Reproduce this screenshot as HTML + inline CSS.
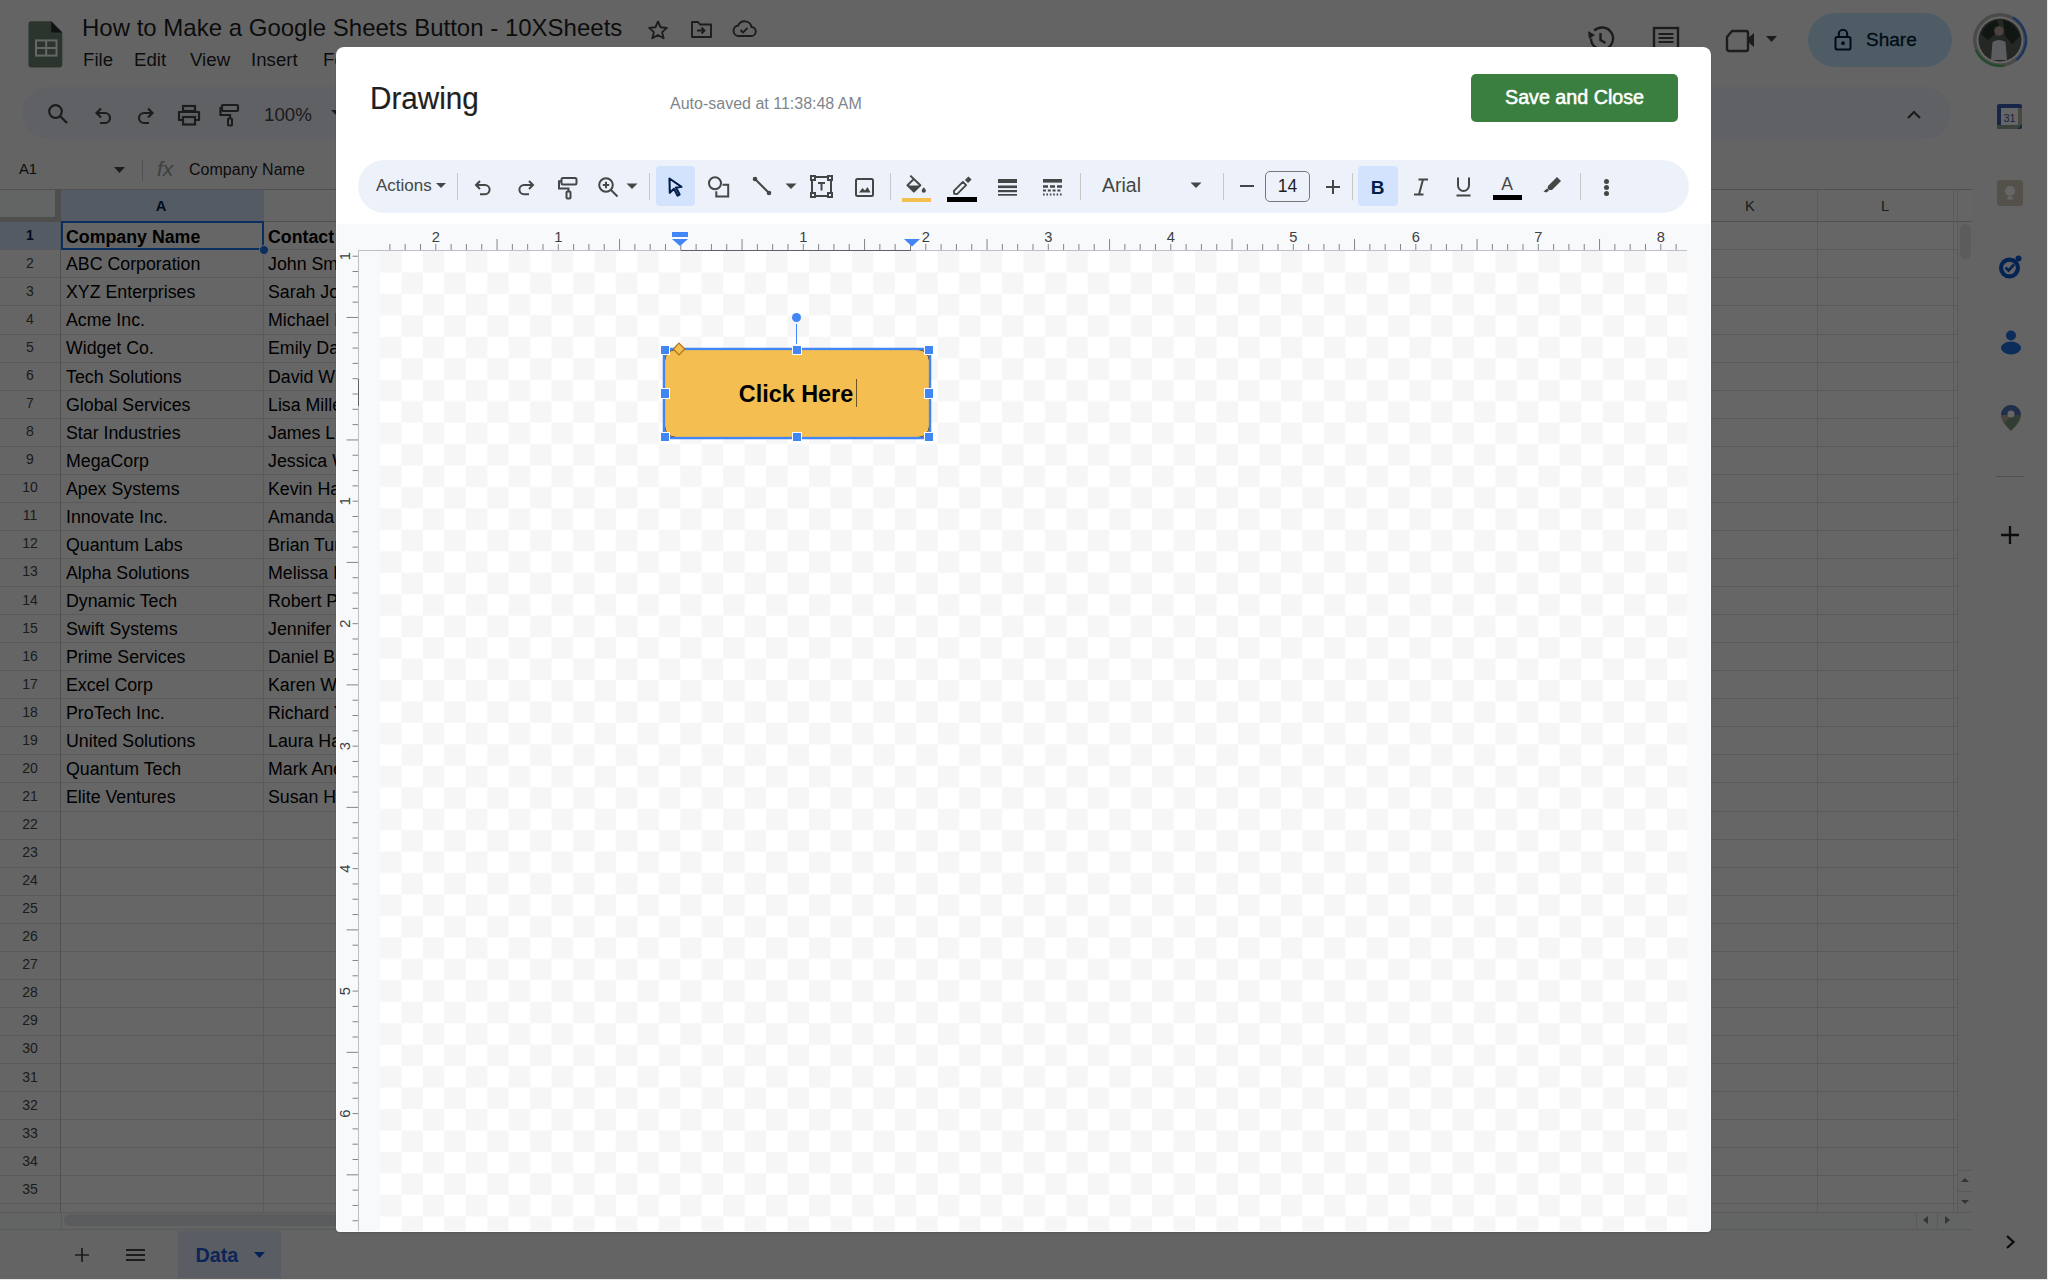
<!DOCTYPE html>
<html><head><meta charset="utf-8"><title>Drawing</title>
<style>
html,body{margin:0;padding:0;}
body{width:2048px;height:1280px;overflow:hidden;position:relative;font-family:"Liberation Sans", sans-serif;background:#666;}
</style></head><body>
<div style="position:absolute;left:0px;top:0px;width:2048px;height:1280px;background:#f9fbfd"></div><svg style="position:absolute;left:28px;top:21px;" width="36" height="47" viewBox="0 0 36 47" >
<path d="M3 0.3 H23.2 L34.3 11.4 V43.5 a3 3 0 0 1 -3 3 H3.4 a3 3 0 0 1 -3 -3 V3.3 a3 3 0 0 1 3 -3z" fill="#6f8672"/>
<path d="M23.2 0.3 V11.4 H34.3z" fill="#2a302b"/>
<rect x="8" y="19.4" width="20.5" height="15.2" fill="none" stroke="#fff" stroke-width="2"/>
<path d="M8 27 H28.5 M18.2 19.4 V34.6" stroke="#fff" stroke-width="2"/>
</svg><div style="position:absolute;left:82px;top:15.68px;font-size:24px;line-height:24px;font-weight:400;color:#1f1f1f;white-space:nowrap;">How to Make a Google Sheets Button - 10XSheets</div><svg style="position:absolute;left:647px;top:19px;" width="22" height="22" viewBox="0 0 22 22" ><path d="M11 2.5 L13.6 8.3 L19.9 8.9 L15.1 13.1 L16.6 19.3 L11 16 L5.4 19.3 L6.9 13.1 L2.1 8.9 L8.4 8.3Z" fill="none" stroke="#444746" stroke-width="1.9" stroke-linejoin="round"/></svg><svg style="position:absolute;left:690px;top:20px;" width="23" height="19" viewBox="0 0 23 19" ><path d="M2 2 H8 L10 4.5 H21 V17 H2Z" fill="none" stroke="#444746" stroke-width="1.9" stroke-linejoin="round"/><path d="M7 10.5 H14 M11.5 7.5 L14.5 10.5 L11.5 13.5" fill="none" stroke="#444746" stroke-width="1.8"/></svg><svg style="position:absolute;left:731px;top:19px;" width="26" height="20" viewBox="0 0 26 20" ><path d="M7 17 H20 a4.5 4.5 0 0 0 0.5 -9 a7 7 0 0 0 -13.3 -1.5 a5.3 5.3 0 0 0 -0.2 10.5z" fill="none" stroke="#444746" stroke-width="1.9"/><path d="M9.5 11 L12 13.5 L16.5 9" fill="none" stroke="#444746" stroke-width="1.8"/></svg><div style="position:absolute;left:83px;top:51.20px;font-size:18.67px;line-height:18.67px;font-weight:400;color:#1f1f1f;white-space:nowrap;">File</div><div style="position:absolute;left:134px;top:51.20px;font-size:18.67px;line-height:18.67px;font-weight:400;color:#1f1f1f;white-space:nowrap;">Edit</div><div style="position:absolute;left:190px;top:51.20px;font-size:18.67px;line-height:18.67px;font-weight:400;color:#1f1f1f;white-space:nowrap;">View</div><div style="position:absolute;left:251px;top:51.20px;font-size:18.67px;line-height:18.67px;font-weight:400;color:#1f1f1f;white-space:nowrap;">Insert</div><div style="position:absolute;left:323px;top:51.20px;font-size:18.67px;line-height:18.67px;font-weight:400;color:#1f1f1f;white-space:nowrap;">Format</div><svg style="position:absolute;left:1585px;top:25px;" width="31" height="28" viewBox="0 0 31 28" ><path d="M6 13.5 a11 11 0 1 0 3.2 -7.8" fill="none" stroke="#444746" stroke-width="2.4"/><path d="M3 6 L4 14 L10 10z" fill="#444746"/><path d="M15.5 8 V15 L20.5 18" fill="none" stroke="#444746" stroke-width="2.4"/></svg><svg style="position:absolute;left:1651px;top:25px;" width="30" height="28" viewBox="0 0 30 28" ><rect x="3" y="3" width="24" height="21" fill="none" stroke="#444746" stroke-width="2.4"/><path d="M7.5 9 H22.5 M7.5 13 H22.5 M7.5 17 H22.5" stroke="#444746" stroke-width="2.2"/></svg><svg style="position:absolute;left:1724px;top:28px;" width="32" height="26" viewBox="0 0 32 26" ><path d="M8 3 H22 a2 2 0 0 1 2 2 V21 a2 2 0 0 1 -2 2 H5 a2 2 0 0 1 -2 -2 V9z" fill="none" stroke="#444746" stroke-width="2.4" stroke-linejoin="round"/><path d="M24 10 L30 5 V19 L24 14z" fill="#444746"/></svg><svg style="position:absolute;left:1766px;top:36px;" width="12" height="7" viewBox="0 0 12 7" ><path d="M0 0 H11 L5.5 6z" fill="#444746"/></svg><div style="position:absolute;left:1808px;top:13px;width:144px;height:54px;background:#c2e7ff;border-radius:27px"></div><svg style="position:absolute;left:1833px;top:27px;" width="20" height="24" viewBox="0 0 20 24" ><rect x="2.5" y="10" width="15" height="12.5" rx="1.8" fill="none" stroke="#001d35" stroke-width="2"/><path d="M5.8 10 V7 a4.2 4.2 0 0 1 8.4 0 V10" fill="none" stroke="#001d35" stroke-width="2"/><circle cx="10" cy="16.2" r="1.9" fill="#001d35"/></svg><div style="position:absolute;left:1866px;top:30.42px;font-size:19px;line-height:19px;font-weight:400;color:#001d35;white-space:nowrap;-webkit-text-stroke:0.3px #001d35;">Share</div><svg style="position:absolute;left:1972px;top:12px;" width="56" height="56" viewBox="0 0 56 56" >
<circle cx="28" cy="28" r="27" fill="#b8bab6"/>
<circle cx="28" cy="28" r="26" fill="none" stroke="#4285f4" stroke-width="2.4" stroke-dasharray="50 200" transform="rotate(-60 28 28)"/>
<circle cx="28" cy="28" r="26" fill="none" stroke="#5bb974" stroke-width="2.4" stroke-dasharray="35 200" transform="rotate(80 28 28)"/>
<circle cx="28" cy="28" r="23.5" fill="#ffffff"/>
<circle cx="28" cy="28" r="21.5" fill="#59645a"/>
<path d="M9 22 q5 -12 16 -14 l3 10 l-12 10z M31 8 q12 2 17 16 l-8 8 l-7 -8z" fill="#2f372f"/>
<circle cx="27" cy="19" r="4.8" fill="#b9a995"/>
<path d="M19 48 l1.5 -18 q6.5 -4 13 0 l1.5 18z" fill="#e6e9ee"/>
</svg><div style="position:absolute;left:22px;top:87px;width:1929px;height:52px;background:#edf2fa;border-radius:26px"></div><svg style="position:absolute;left:47px;top:103px;" width="22" height="22" viewBox="0 0 22 22" ><circle cx="8.5" cy="8.5" r="6.3" fill="none" stroke="#444746" stroke-width="2.2"/><path d="M13 13 L20 20" stroke="#444746" stroke-width="2.4"/></svg><svg style="position:absolute;left:93px;top:105px;" width="20" height="20" viewBox="0 0 20 20" ><path d="M4.5 8 H12 a5 5 0 0 1 0 10 H7" fill="none" stroke="#444746" stroke-width="2.2"/><path d="M8 3.5 L3.5 8 L8 12.5" fill="none" stroke="#444746" stroke-width="2.2"/></svg><svg style="position:absolute;left:136px;top:105px;" width="20" height="20" viewBox="0 0 20 20" ><path d="M15.5 8 H8 a5 5 0 0 0 0 10 H13" fill="none" stroke="#444746" stroke-width="2.2"/><path d="M12 3.5 L16.5 8 L12 12.5" fill="none" stroke="#444746" stroke-width="2.2"/></svg><svg style="position:absolute;left:177px;top:104px;" width="24" height="22" viewBox="0 0 24 22" ><rect x="6" y="2" width="12" height="5" fill="none" stroke="#444746" stroke-width="2.2"/><path d="M5 16 H2 V8 H22 V16 H19" fill="none" stroke="#444746" stroke-width="2.2" stroke-linejoin="round"/><rect x="6" y="13" width="12" height="7.5" fill="none" stroke="#444746" stroke-width="2.2"/></svg><svg style="position:absolute;left:219px;top:103px;" width="22" height="24" viewBox="0 0 22 24" ><rect x="3" y="2" width="16" height="6" rx="1" fill="none" stroke="#444746" stroke-width="2.2"/><path d="M3 5 H1.5 V12 H11 V15" fill="none" stroke="#444746" stroke-width="2.2"/><rect x="9" y="15.5" width="4" height="7" rx="0.8" fill="none" stroke="#444746" stroke-width="2"/></svg><div style="position:absolute;left:264px;top:105.70px;font-size:18.67px;line-height:18.67px;font-weight:400;color:#444746;white-space:nowrap;">100%</div><svg style="position:absolute;left:331px;top:110px;" width="11" height="6" viewBox="0 0 11 6" ><path d="M0 0 H10 L5 5z" fill="#444746"/></svg><svg style="position:absolute;left:1906px;top:108px;" width="16" height="12" viewBox="0 0 16 12" ><path d="M2 10 L8 4 L14 10" fill="none" stroke="#444746" stroke-width="2.2"/></svg><div style="position:absolute;left:19px;top:162.47px;font-size:14.8px;line-height:14.8px;font-weight:400;color:#1f1f1f;white-space:nowrap;">A1</div><svg style="position:absolute;left:114px;top:167px;" width="12" height="7" viewBox="0 0 12 7" ><path d="M0 0 H11 L5.5 6z" fill="#444746"/></svg><div style="position:absolute;left:142px;top:160px;width:1px;height:21px;background:#c7c7c7"></div><div style="position:absolute;left:157px;top:158.22px;font-size:21px;line-height:21px;font-weight:400;color:#9aa0a6;white-space:nowrap;font-family:"Liberation Serif",serif;letter-spacing:-0.5px;"><i>fx</i></div><div style="position:absolute;left:189px;top:161.21px;font-size:16.05px;line-height:16.05px;font-weight:400;color:#1f1f1f;white-space:nowrap;">Company Name</div><div style="position:absolute;left:0px;top:189px;width:1972px;height:1px;background:#c7c7c7"></div><div style="position:absolute;left:61px;top:190px;width:1911px;height:31px;background:#fdfdfd"></div><div style="position:absolute;left:61px;top:190px;width:202px;height:31px;background:#d3e3fd"></div><div style="position:absolute;left:0px;top:221px;width:61px;height:991px;background:#fdfdfd"></div><div style="position:absolute;left:0px;top:221px;width:61px;height:28px;background:#d3e3fd"></div><div style="position:absolute;left:61px;top:221px;width:1896px;height:991px;background:#fff"></div><div style="position:absolute;left:0px;top:249px;width:1957px;height:1px;background:#e1e1e1"></div><div style="position:absolute;left:0px;top:277px;width:1957px;height:1px;background:#e1e1e1"></div><div style="position:absolute;left:0px;top:305px;width:1957px;height:1px;background:#e1e1e1"></div><div style="position:absolute;left:0px;top:334px;width:1957px;height:1px;background:#e1e1e1"></div><div style="position:absolute;left:0px;top:362px;width:1957px;height:1px;background:#e1e1e1"></div><div style="position:absolute;left:0px;top:390px;width:1957px;height:1px;background:#e1e1e1"></div><div style="position:absolute;left:0px;top:418px;width:1957px;height:1px;background:#e1e1e1"></div><div style="position:absolute;left:0px;top:446px;width:1957px;height:1px;background:#e1e1e1"></div><div style="position:absolute;left:0px;top:474px;width:1957px;height:1px;background:#e1e1e1"></div><div style="position:absolute;left:0px;top:502px;width:1957px;height:1px;background:#e1e1e1"></div><div style="position:absolute;left:0px;top:530px;width:1957px;height:1px;background:#e1e1e1"></div><div style="position:absolute;left:0px;top:558px;width:1957px;height:1px;background:#e1e1e1"></div><div style="position:absolute;left:0px;top:586px;width:1957px;height:1px;background:#e1e1e1"></div><div style="position:absolute;left:0px;top:614px;width:1957px;height:1px;background:#e1e1e1"></div><div style="position:absolute;left:0px;top:642px;width:1957px;height:1px;background:#e1e1e1"></div><div style="position:absolute;left:0px;top:670px;width:1957px;height:1px;background:#e1e1e1"></div><div style="position:absolute;left:0px;top:698px;width:1957px;height:1px;background:#e1e1e1"></div><div style="position:absolute;left:0px;top:726px;width:1957px;height:1px;background:#e1e1e1"></div><div style="position:absolute;left:0px;top:754px;width:1957px;height:1px;background:#e1e1e1"></div><div style="position:absolute;left:0px;top:782px;width:1957px;height:1px;background:#e1e1e1"></div><div style="position:absolute;left:0px;top:811px;width:1957px;height:1px;background:#e1e1e1"></div><div style="position:absolute;left:0px;top:839px;width:1957px;height:1px;background:#e1e1e1"></div><div style="position:absolute;left:0px;top:867px;width:1957px;height:1px;background:#e1e1e1"></div><div style="position:absolute;left:0px;top:895px;width:1957px;height:1px;background:#e1e1e1"></div><div style="position:absolute;left:0px;top:923px;width:1957px;height:1px;background:#e1e1e1"></div><div style="position:absolute;left:0px;top:951px;width:1957px;height:1px;background:#e1e1e1"></div><div style="position:absolute;left:0px;top:979px;width:1957px;height:1px;background:#e1e1e1"></div><div style="position:absolute;left:0px;top:1007px;width:1957px;height:1px;background:#e1e1e1"></div><div style="position:absolute;left:0px;top:1035px;width:1957px;height:1px;background:#e1e1e1"></div><div style="position:absolute;left:0px;top:1063px;width:1957px;height:1px;background:#e1e1e1"></div><div style="position:absolute;left:0px;top:1091px;width:1957px;height:1px;background:#e1e1e1"></div><div style="position:absolute;left:0px;top:1119px;width:1957px;height:1px;background:#e1e1e1"></div><div style="position:absolute;left:0px;top:1147px;width:1957px;height:1px;background:#e1e1e1"></div><div style="position:absolute;left:0px;top:1175px;width:1957px;height:1px;background:#e1e1e1"></div><div style="position:absolute;left:0px;top:1203px;width:1957px;height:1px;background:#e1e1e1"></div><div style="position:absolute;left:0px;top:221px;width:1972px;height:1px;background:#c7c7c7"></div><div style="position:absolute;left:263px;top:190px;width:1px;height:1022px;background:#e1e1e1"></div><div style="position:absolute;left:465px;top:190px;width:1px;height:1022px;background:#e1e1e1"></div><div style="position:absolute;left:667px;top:190px;width:1px;height:1022px;background:#e1e1e1"></div><div style="position:absolute;left:869px;top:190px;width:1px;height:1022px;background:#e1e1e1"></div><div style="position:absolute;left:1071px;top:190px;width:1px;height:1022px;background:#e1e1e1"></div><div style="position:absolute;left:1273px;top:190px;width:1px;height:1022px;background:#e1e1e1"></div><div style="position:absolute;left:1475px;top:190px;width:1px;height:1022px;background:#e1e1e1"></div><div style="position:absolute;left:1683px;top:190px;width:1px;height:1022px;background:#e1e1e1"></div><div style="position:absolute;left:1817px;top:190px;width:1px;height:1022px;background:#e1e1e1"></div><div style="position:absolute;left:1953px;top:190px;width:1px;height:1022px;background:#e1e1e1"></div><div style="position:absolute;left:60px;top:190px;width:1px;height:1022px;background:#c7c7c7"></div><div style="position:absolute;left:1957px;top:190px;width:1px;height:1022px;background:#e1e1e1"></div><div style="position:absolute;left:0px;top:190px;width:55px;height:27px;background:#f8f9fa"></div><div style="position:absolute;left:55px;top:190px;width:6px;height:31px;background:#c2c2c2"></div><div style="position:absolute;left:0px;top:217px;width:61px;height:5px;background:#c2c2c2"></div><div style="position:absolute;left:-139px;width:600px;text-align:center;top:198.58px;font-size:14.67px;line-height:14.67px;font-weight:700;color:#041e49;white-space:nowrap;">A</div><div style="position:absolute;left:1450px;width:600px;text-align:center;top:198.58px;font-size:14.67px;line-height:14.67px;font-weight:400;color:#444746;white-space:nowrap;">K</div><div style="position:absolute;left:1585px;width:600px;text-align:center;top:198.58px;font-size:14.67px;line-height:14.67px;font-weight:400;color:#444746;white-space:nowrap;">L</div><div style="position:absolute;left:-270px;width:600px;text-align:center;top:227.75px;font-size:14px;line-height:14px;font-weight:700;color:#041e49;white-space:nowrap;">1</div><div style="position:absolute;left:-270px;width:600px;text-align:center;top:255.81px;font-size:14px;line-height:14px;font-weight:400;color:#444746;white-space:nowrap;">2</div><div style="position:absolute;left:-270px;width:600px;text-align:center;top:283.87px;font-size:14px;line-height:14px;font-weight:400;color:#444746;white-space:nowrap;">3</div><div style="position:absolute;left:-270px;width:600px;text-align:center;top:311.93px;font-size:14px;line-height:14px;font-weight:400;color:#444746;white-space:nowrap;">4</div><div style="position:absolute;left:-270px;width:600px;text-align:center;top:339.99px;font-size:14px;line-height:14px;font-weight:400;color:#444746;white-space:nowrap;">5</div><div style="position:absolute;left:-270px;width:600px;text-align:center;top:368.05px;font-size:14px;line-height:14px;font-weight:400;color:#444746;white-space:nowrap;">6</div><div style="position:absolute;left:-270px;width:600px;text-align:center;top:396.11px;font-size:14px;line-height:14px;font-weight:400;color:#444746;white-space:nowrap;">7</div><div style="position:absolute;left:-270px;width:600px;text-align:center;top:424.17px;font-size:14px;line-height:14px;font-weight:400;color:#444746;white-space:nowrap;">8</div><div style="position:absolute;left:-270px;width:600px;text-align:center;top:452.23px;font-size:14px;line-height:14px;font-weight:400;color:#444746;white-space:nowrap;">9</div><div style="position:absolute;left:-270px;width:600px;text-align:center;top:480.29px;font-size:14px;line-height:14px;font-weight:400;color:#444746;white-space:nowrap;">10</div><div style="position:absolute;left:-270px;width:600px;text-align:center;top:508.35px;font-size:14px;line-height:14px;font-weight:400;color:#444746;white-space:nowrap;">11</div><div style="position:absolute;left:-270px;width:600px;text-align:center;top:536.41px;font-size:14px;line-height:14px;font-weight:400;color:#444746;white-space:nowrap;">12</div><div style="position:absolute;left:-270px;width:600px;text-align:center;top:564.47px;font-size:14px;line-height:14px;font-weight:400;color:#444746;white-space:nowrap;">13</div><div style="position:absolute;left:-270px;width:600px;text-align:center;top:592.53px;font-size:14px;line-height:14px;font-weight:400;color:#444746;white-space:nowrap;">14</div><div style="position:absolute;left:-270px;width:600px;text-align:center;top:620.59px;font-size:14px;line-height:14px;font-weight:400;color:#444746;white-space:nowrap;">15</div><div style="position:absolute;left:-270px;width:600px;text-align:center;top:648.65px;font-size:14px;line-height:14px;font-weight:400;color:#444746;white-space:nowrap;">16</div><div style="position:absolute;left:-270px;width:600px;text-align:center;top:676.71px;font-size:14px;line-height:14px;font-weight:400;color:#444746;white-space:nowrap;">17</div><div style="position:absolute;left:-270px;width:600px;text-align:center;top:704.77px;font-size:14px;line-height:14px;font-weight:400;color:#444746;white-space:nowrap;">18</div><div style="position:absolute;left:-270px;width:600px;text-align:center;top:732.83px;font-size:14px;line-height:14px;font-weight:400;color:#444746;white-space:nowrap;">19</div><div style="position:absolute;left:-270px;width:600px;text-align:center;top:760.89px;font-size:14px;line-height:14px;font-weight:400;color:#444746;white-space:nowrap;">20</div><div style="position:absolute;left:-270px;width:600px;text-align:center;top:788.95px;font-size:14px;line-height:14px;font-weight:400;color:#444746;white-space:nowrap;">21</div><div style="position:absolute;left:-270px;width:600px;text-align:center;top:817.01px;font-size:14px;line-height:14px;font-weight:400;color:#444746;white-space:nowrap;">22</div><div style="position:absolute;left:-270px;width:600px;text-align:center;top:845.07px;font-size:14px;line-height:14px;font-weight:400;color:#444746;white-space:nowrap;">23</div><div style="position:absolute;left:-270px;width:600px;text-align:center;top:873.13px;font-size:14px;line-height:14px;font-weight:400;color:#444746;white-space:nowrap;">24</div><div style="position:absolute;left:-270px;width:600px;text-align:center;top:901.19px;font-size:14px;line-height:14px;font-weight:400;color:#444746;white-space:nowrap;">25</div><div style="position:absolute;left:-270px;width:600px;text-align:center;top:929.25px;font-size:14px;line-height:14px;font-weight:400;color:#444746;white-space:nowrap;">26</div><div style="position:absolute;left:-270px;width:600px;text-align:center;top:957.31px;font-size:14px;line-height:14px;font-weight:400;color:#444746;white-space:nowrap;">27</div><div style="position:absolute;left:-270px;width:600px;text-align:center;top:985.37px;font-size:14px;line-height:14px;font-weight:400;color:#444746;white-space:nowrap;">28</div><div style="position:absolute;left:-270px;width:600px;text-align:center;top:1013.43px;font-size:14px;line-height:14px;font-weight:400;color:#444746;white-space:nowrap;">29</div><div style="position:absolute;left:-270px;width:600px;text-align:center;top:1041.49px;font-size:14px;line-height:14px;font-weight:400;color:#444746;white-space:nowrap;">30</div><div style="position:absolute;left:-270px;width:600px;text-align:center;top:1069.55px;font-size:14px;line-height:14px;font-weight:400;color:#444746;white-space:nowrap;">31</div><div style="position:absolute;left:-270px;width:600px;text-align:center;top:1097.61px;font-size:14px;line-height:14px;font-weight:400;color:#444746;white-space:nowrap;">32</div><div style="position:absolute;left:-270px;width:600px;text-align:center;top:1125.67px;font-size:14px;line-height:14px;font-weight:400;color:#444746;white-space:nowrap;">33</div><div style="position:absolute;left:-270px;width:600px;text-align:center;top:1153.73px;font-size:14px;line-height:14px;font-weight:400;color:#444746;white-space:nowrap;">34</div><div style="position:absolute;left:-270px;width:600px;text-align:center;top:1181.79px;font-size:14px;line-height:14px;font-weight:400;color:#444746;white-space:nowrap;">35</div><div style="position:absolute;left:0;top:1204px;width:61px;height:8px;overflow:hidden"><div style="position:absolute;left:-270px;width:600px;text-align:center;top:6.45px;font-size:14px;line-height:14px;font-weight:400;color:#444746;white-space:nowrap;">36</div></div><div style="position:absolute;left:66px;top:229.25px;font-size:17.78px;line-height:17.78px;font-weight:700;color:#000;white-space:nowrap;">Company Name</div><div style="position:absolute;left:268px;top:229.25px;font-size:17.78px;line-height:17.78px;font-weight:700;color:#000;white-space:nowrap;">Contact Person</div><div style="position:absolute;left:66px;top:256.31px;font-size:17.78px;line-height:17.78px;font-weight:400;color:#000;white-space:nowrap;">ABC Corporation</div><div style="position:absolute;left:268px;top:256.31px;font-size:17.78px;line-height:17.78px;font-weight:400;color:#000;white-space:nowrap;">John Smith</div><div style="position:absolute;left:66px;top:284.37px;font-size:17.78px;line-height:17.78px;font-weight:400;color:#000;white-space:nowrap;">XYZ Enterprises</div><div style="position:absolute;left:268px;top:284.37px;font-size:17.78px;line-height:17.78px;font-weight:400;color:#000;white-space:nowrap;">Sarah Johnson</div><div style="position:absolute;left:66px;top:312.43px;font-size:17.78px;line-height:17.78px;font-weight:400;color:#000;white-space:nowrap;">Acme Inc.</div><div style="position:absolute;left:268px;top:312.43px;font-size:17.78px;line-height:17.78px;font-weight:400;color:#000;white-space:nowrap;">Michael Brown</div><div style="position:absolute;left:66px;top:340.49px;font-size:17.78px;line-height:17.78px;font-weight:400;color:#000;white-space:nowrap;">Widget Co.</div><div style="position:absolute;left:268px;top:340.49px;font-size:17.78px;line-height:17.78px;font-weight:400;color:#000;white-space:nowrap;">Emily Davis</div><div style="position:absolute;left:66px;top:368.55px;font-size:17.78px;line-height:17.78px;font-weight:400;color:#000;white-space:nowrap;">Tech Solutions</div><div style="position:absolute;left:268px;top:368.55px;font-size:17.78px;line-height:17.78px;font-weight:400;color:#000;white-space:nowrap;">David Wilson</div><div style="position:absolute;left:66px;top:396.61px;font-size:17.78px;line-height:17.78px;font-weight:400;color:#000;white-space:nowrap;">Global Services</div><div style="position:absolute;left:268px;top:396.61px;font-size:17.78px;line-height:17.78px;font-weight:400;color:#000;white-space:nowrap;">Lisa Miller</div><div style="position:absolute;left:66px;top:424.67px;font-size:17.78px;line-height:17.78px;font-weight:400;color:#000;white-space:nowrap;">Star Industries</div><div style="position:absolute;left:268px;top:424.67px;font-size:17.78px;line-height:17.78px;font-weight:400;color:#000;white-space:nowrap;">James Lee</div><div style="position:absolute;left:66px;top:452.73px;font-size:17.78px;line-height:17.78px;font-weight:400;color:#000;white-space:nowrap;">MegaCorp</div><div style="position:absolute;left:268px;top:452.73px;font-size:17.78px;line-height:17.78px;font-weight:400;color:#000;white-space:nowrap;">Jessica Wong</div><div style="position:absolute;left:66px;top:480.79px;font-size:17.78px;line-height:17.78px;font-weight:400;color:#000;white-space:nowrap;">Apex Systems</div><div style="position:absolute;left:268px;top:480.79px;font-size:17.78px;line-height:17.78px;font-weight:400;color:#000;white-space:nowrap;">Kevin Harris</div><div style="position:absolute;left:66px;top:508.85px;font-size:17.78px;line-height:17.78px;font-weight:400;color:#000;white-space:nowrap;">Innovate Inc.</div><div style="position:absolute;left:268px;top:508.85px;font-size:17.78px;line-height:17.78px;font-weight:400;color:#000;white-space:nowrap;">Amanda Clark</div><div style="position:absolute;left:66px;top:536.91px;font-size:17.78px;line-height:17.78px;font-weight:400;color:#000;white-space:nowrap;">Quantum Labs</div><div style="position:absolute;left:268px;top:536.91px;font-size:17.78px;line-height:17.78px;font-weight:400;color:#000;white-space:nowrap;">Brian Turner</div><div style="position:absolute;left:66px;top:564.97px;font-size:17.78px;line-height:17.78px;font-weight:400;color:#000;white-space:nowrap;">Alpha Solutions</div><div style="position:absolute;left:268px;top:564.97px;font-size:17.78px;line-height:17.78px;font-weight:400;color:#000;white-space:nowrap;">Melissa King</div><div style="position:absolute;left:66px;top:593.03px;font-size:17.78px;line-height:17.78px;font-weight:400;color:#000;white-space:nowrap;">Dynamic Tech</div><div style="position:absolute;left:268px;top:593.03px;font-size:17.78px;line-height:17.78px;font-weight:400;color:#000;white-space:nowrap;">Robert Perez</div><div style="position:absolute;left:66px;top:621.09px;font-size:17.78px;line-height:17.78px;font-weight:400;color:#000;white-space:nowrap;">Swift Systems</div><div style="position:absolute;left:268px;top:621.09px;font-size:17.78px;line-height:17.78px;font-weight:400;color:#000;white-space:nowrap;">Jennifer Scott</div><div style="position:absolute;left:66px;top:649.15px;font-size:17.78px;line-height:17.78px;font-weight:400;color:#000;white-space:nowrap;">Prime Services</div><div style="position:absolute;left:268px;top:649.15px;font-size:17.78px;line-height:17.78px;font-weight:400;color:#000;white-space:nowrap;">Daniel Baker</div><div style="position:absolute;left:66px;top:677.21px;font-size:17.78px;line-height:17.78px;font-weight:400;color:#000;white-space:nowrap;">Excel Corp</div><div style="position:absolute;left:268px;top:677.21px;font-size:17.78px;line-height:17.78px;font-weight:400;color:#000;white-space:nowrap;">Karen White</div><div style="position:absolute;left:66px;top:705.27px;font-size:17.78px;line-height:17.78px;font-weight:400;color:#000;white-space:nowrap;">ProTech Inc.</div><div style="position:absolute;left:268px;top:705.27px;font-size:17.78px;line-height:17.78px;font-weight:400;color:#000;white-space:nowrap;">Richard Young</div><div style="position:absolute;left:66px;top:733.33px;font-size:17.78px;line-height:17.78px;font-weight:400;color:#000;white-space:nowrap;">United Solutions</div><div style="position:absolute;left:268px;top:733.33px;font-size:17.78px;line-height:17.78px;font-weight:400;color:#000;white-space:nowrap;">Laura Hall</div><div style="position:absolute;left:66px;top:761.39px;font-size:17.78px;line-height:17.78px;font-weight:400;color:#000;white-space:nowrap;">Quantum Tech</div><div style="position:absolute;left:268px;top:761.39px;font-size:17.78px;line-height:17.78px;font-weight:400;color:#000;white-space:nowrap;">Mark Anderson</div><div style="position:absolute;left:66px;top:789.45px;font-size:17.78px;line-height:17.78px;font-weight:400;color:#000;white-space:nowrap;">Elite Ventures</div><div style="position:absolute;left:268px;top:789.45px;font-size:17.78px;line-height:17.78px;font-weight:400;color:#000;white-space:nowrap;">Susan Hill</div><div style="position:absolute;left:61px;top:221px;width:203px;height:29px;border:2px solid #1a73e8;box-sizing:border-box"></div><div style="position:absolute;left:259px;top:245px;width:10px;height:10px;background:#1a73e8;border-radius:50%;border:1px solid #fff;box-sizing:border-box"></div><div style="position:absolute;left:1960px;top:224px;width:11px;height:35px;background:#e3e5e8;border-radius:6px"></div><div style="position:absolute;left:1957px;top:1170px;width:15px;height:1px;background:#e1e1e1"></div><svg style="position:absolute;left:1958px;top:1175px;" width="14" height="10" viewBox="0 0 14 10" ><path d="M3 7 H11 L7 3z" fill="#80868b"/></svg><div style="position:absolute;left:1958px;top:1191px;width:14px;height:1px;background:#e1e1e1"></div><svg style="position:absolute;left:1958px;top:1197px;" width="14" height="10" viewBox="0 0 14 10" ><path d="M3 3 H11 L7 7z" fill="#80868b"/></svg><div style="position:absolute;left:0px;top:1212px;width:1972px;height:18px;background:#f8f9fa"></div><div style="position:absolute;left:0px;top:1212px;width:1972px;height:1px;background:#e1e1e1"></div><div style="position:absolute;left:61px;top:1212px;width:1px;height:18px;background:#e1e1e1"></div><div style="position:absolute;left:64px;top:1214px;width:1560px;height:12px;background:#e3e5e8;border-radius:6px"></div><div style="position:absolute;left:1916px;top:1212px;width:1px;height:17px;background:#e1e1e1"></div><div style="position:absolute;left:1937px;top:1212px;width:1px;height:17px;background:#e1e1e1"></div><svg style="position:absolute;left:1920px;top:1214px;" width="12" height="12" viewBox="0 0 12 12" ><path d="M8 2 V10 L3 6z" fill="#80868b"/></svg><svg style="position:absolute;left:1941px;top:1214px;" width="12" height="12" viewBox="0 0 12 12" ><path d="M4 2 V10 L9 6z" fill="#80868b"/></svg><div style="position:absolute;left:0px;top:1229px;width:1972px;height:1px;background:#e1e1e1"></div><div style="position:absolute;left:178px;top:1231px;width:103px;height:47px;background:#e1e9f7"></div><svg style="position:absolute;left:74px;top:1247px;" width="16" height="16" viewBox="0 0 16 16" ><path d="M8 1 V15 M1 8 H15" stroke="#444746" stroke-width="1.7"/></svg><svg style="position:absolute;left:125px;top:1248px;" width="21" height="14" viewBox="0 0 21 14" ><path d="M1 2 H20 M1 7 H20 M1 12 H20" stroke="#444746" stroke-width="2"/></svg><div style="position:absolute;left:195.5px;top:1246.24px;font-size:19.8px;line-height:19.8px;font-weight:700;color:#1c5ed6;white-space:nowrap;">Data</div><svg style="position:absolute;left:254px;top:1252px;" width="12" height="7" viewBox="0 0 12 7" ><path d="M0 0 H11 L5.5 6z" fill="#0b57d0"/></svg><div style="position:absolute;left:1972px;top:70px;width:76px;height:1210px;background:#f9fbfd"></div><svg style="position:absolute;left:1996px;top:103px;" width="28" height="28" viewBox="0 0 28 28" ><rect x="1" y="1" width="25" height="25" rx="2" fill="#3b5fb0"/><path d="M22 5 H26 V21 L21 26 H5 V22 H22z" fill="#b3b1a3"/><path d="M1 22 H21 L26 21 L21 26 H3 a2 2 0 0 1 -2 -2z" fill="#8fa78f"/><rect x="5" y="5" width="17" height="17" fill="#fff"/><text x="13.5" y="18.5" font-size="11" text-anchor="middle" fill="#3b5fb0" font-family="Liberation Sans">31</text></svg><svg style="position:absolute;left:1996px;top:179px;" width="28" height="28" viewBox="0 0 28 28" ><rect x="1" y="1" width="26" height="26" rx="3" fill="#d2cbbb"/><circle cx="14" cy="12" r="5" fill="#fff"/><rect x="11.5" y="17.5" width="5" height="3" fill="#fff"/></svg><svg style="position:absolute;left:1997px;top:254px;" width="27" height="27" viewBox="0 0 27 27" ><circle cx="12.5" cy="14" r="10.5" fill="#0b57d0"/><circle cx="12.5" cy="14" r="6.3" fill="#f9fbfd"/><path d="M8.5 13.5 L11.5 16.5 L17 10.5" fill="none" stroke="#0b57d0" stroke-width="2.6"/><circle cx="21.5" cy="4.5" r="3" fill="#0b57d0"/></svg><svg style="position:absolute;left:1999px;top:329px;" width="24" height="26" viewBox="0 0 24 26" ><circle cx="12" cy="6.5" r="5" fill="#1f6fe0"/><ellipse cx="12" cy="19" rx="10" ry="6.5" fill="#1f6fe0"/></svg><svg style="position:absolute;left:2000px;top:404px;" width="22" height="28" viewBox="0 0 22 28" ><path d="M11 1 a10 10 0 0 1 10 10 c0 7 -10 16 -10 16 S1 18 1 11 A10 10 0 0 1 11 1z" fill="#7d9a80"/><path d="M11 1 a10 10 0 0 1 10 10 H1 A10 10 0 0 1 11 1z" fill="#5577bb"/><path d="M1 11 c0 3 2 6 4 8 L11 11z" fill="#b8b09a"/><circle cx="11" cy="10" r="3.5" fill="#fff"/></svg><div style="position:absolute;left:1996px;top:476px;width:28px;height:1px;background:#c7c7c7"></div><svg style="position:absolute;left:2000px;top:525px;" width="20" height="20" viewBox="0 0 20 20" ><path d="M10 1 V19 M1 10 H19" stroke="#1f1f1f" stroke-width="2.3"/></svg><svg style="position:absolute;left:2003px;top:1234px;" width="14" height="16" viewBox="0 0 14 16" ><path d="M4 2 L10.5 8 L4 14" fill="none" stroke="#1f1f1f" stroke-width="2.3"/></svg><div style="position:absolute;left:0px;top:0px;width:2048px;height:1280px;background:rgba(0,0,0,0.6)"></div><div style="position:absolute;left:2047px;top:0px;width:1px;height:1280px;background:#e8e8e8"></div><div style="position:absolute;left:0px;top:1279px;width:2048px;height:1px;background:#e8e8e8"></div><div style="position:absolute;left:336px;top:47px;width:1375px;height:1185px;background:#fff;border-radius:8px 8px 4px 4px;box-shadow:0 1px 2px rgba(0,0,0,0.15)"></div><div style="position:absolute;left:369.5px;top:82.90px;font-size:30.6px;line-height:30.6px;font-weight:400;color:#1f1f1f;white-space:nowrap;transform:scaleX(0.97);transform-origin:0 0;-webkit-text-stroke:0.2px #1f1f1f;">Drawing</div><div style="position:absolute;left:670px;top:95.96px;font-size:16px;line-height:16px;font-weight:400;color:#80868b;white-space:nowrap;">Auto-saved at 11:38:48 AM</div><div style="position:absolute;left:1471px;top:74px;width:207px;height:48px;background:#3b7f40;border-radius:5px"></div><div style="position:absolute;left:1274.5px;width:600px;text-align:center;top:87.82px;font-size:19.7px;line-height:19.7px;font-weight:400;color:#fff;white-space:nowrap;-webkit-text-stroke:0.55px #fff;">Save and Close</div><div style="position:absolute;left:358px;top:160px;width:1331px;height:53px;background:#edf2fa;border-radius:26.5px"></div><div style="position:absolute;left:376px;top:176.61px;font-size:17px;line-height:17px;font-weight:400;color:#444746;white-space:nowrap;">Actions</div><svg style="position:absolute;left:436px;top:183px;" width="11" height="6" viewBox="0 0 11 6" ><path d="M0 0 H10 L5 5z" fill="#444746"/></svg><div style="position:absolute;left:457px;top:173px;width:1px;height:27px;background:#c7c7c7"></div><div style="position:absolute;left:649px;top:173px;width:1px;height:27px;background:#c7c7c7"></div><div style="position:absolute;left:890px;top:173px;width:1px;height:27px;background:#c7c7c7"></div><div style="position:absolute;left:1080px;top:173px;width:1px;height:27px;background:#c7c7c7"></div><div style="position:absolute;left:1223px;top:173px;width:1px;height:27px;background:#c7c7c7"></div><div style="position:absolute;left:1352px;top:173px;width:1px;height:27px;background:#c7c7c7"></div><div style="position:absolute;left:1580px;top:173px;width:1px;height:27px;background:#c7c7c7"></div><div style="position:absolute;left:656px;top:166px;width:39px;height:40px;background:#d3e3fd;border-radius:4px"></div><div style="position:absolute;left:1358px;top:166px;width:40px;height:40px;background:#d3e3fd;border-radius:4px"></div><div id="cv" style="position:absolute;left:337px;top:224px;width:1373px;height:1007px;background:#f8f9fb;border-bottom-left-radius:3px;border-bottom-right-radius:3px"></div><svg style="position:absolute;left:380px;top:251px;" width="1307" height="980" viewBox="0 0 1307 980" ><defs><pattern id="ck" patternUnits="userSpaceOnUse" width="42.9" height="42.9"><rect width="42.9" height="42.9" fill="#fff"/><rect width="21.45" height="21.45" fill="#f6f6f6"/><rect x="21.45" y="21.45" width="21.45" height="21.45" fill="#f6f6f6"/></pattern></defs><rect width="1307" height="980" fill="url(#ck)"/></svg><svg style="position:absolute;left:337px;top:224px;" width="1373" height="27" viewBox="0 0 1373 27" ><line x1="21" y1="26.5" x2="1350" y2="26.5" stroke="#bdc1c6" stroke-width="1"/><line x1="343.79999999999995" y1="26.5" x2="574" y2="26.5" stroke="#5f6368" stroke-width="1"/><line x1="52.86" y1="20" x2="52.86" y2="26" stroke="#80868b" stroke-width="1"/><line x1="68.17" y1="20" x2="68.17" y2="26" stroke="#80868b" stroke-width="1"/><line x1="83.49" y1="20" x2="83.49" y2="26" stroke="#80868b" stroke-width="1"/><line x1="98.80" y1="20" x2="98.80" y2="26" stroke="#80868b" stroke-width="1"/><text x="98.80" y="18" font-size="14.67" text-anchor="middle" fill="#3c4043" font-family="Liberation Sans">2</text><line x1="114.11" y1="20" x2="114.11" y2="26" stroke="#80868b" stroke-width="1"/><line x1="129.42" y1="20" x2="129.42" y2="26" stroke="#80868b" stroke-width="1"/><line x1="144.74" y1="20" x2="144.74" y2="26" stroke="#80868b" stroke-width="1"/><line x1="160.05" y1="15" x2="160.05" y2="26" stroke="#80868b" stroke-width="1"/><line x1="175.36" y1="20" x2="175.36" y2="26" stroke="#80868b" stroke-width="1"/><line x1="190.67" y1="20" x2="190.67" y2="26" stroke="#80868b" stroke-width="1"/><line x1="205.99" y1="20" x2="205.99" y2="26" stroke="#80868b" stroke-width="1"/><line x1="221.30" y1="20" x2="221.30" y2="26" stroke="#80868b" stroke-width="1"/><text x="221.30" y="18" font-size="14.67" text-anchor="middle" fill="#3c4043" font-family="Liberation Sans">1</text><line x1="236.61" y1="20" x2="236.61" y2="26" stroke="#80868b" stroke-width="1"/><line x1="251.92" y1="20" x2="251.92" y2="26" stroke="#80868b" stroke-width="1"/><line x1="267.24" y1="20" x2="267.24" y2="26" stroke="#80868b" stroke-width="1"/><line x1="282.55" y1="15" x2="282.55" y2="26" stroke="#80868b" stroke-width="1"/><line x1="297.86" y1="20" x2="297.86" y2="26" stroke="#80868b" stroke-width="1"/><line x1="313.17" y1="20" x2="313.17" y2="26" stroke="#80868b" stroke-width="1"/><line x1="328.49" y1="20" x2="328.49" y2="26" stroke="#80868b" stroke-width="1"/><line x1="343.80" y1="20" x2="343.80" y2="26" stroke="#80868b" stroke-width="1"/><line x1="359.11" y1="20" x2="359.11" y2="26" stroke="#80868b" stroke-width="1"/><line x1="374.42" y1="20" x2="374.42" y2="26" stroke="#80868b" stroke-width="1"/><line x1="389.74" y1="20" x2="389.74" y2="26" stroke="#80868b" stroke-width="1"/><line x1="405.05" y1="15" x2="405.05" y2="26" stroke="#80868b" stroke-width="1"/><line x1="420.36" y1="20" x2="420.36" y2="26" stroke="#80868b" stroke-width="1"/><line x1="435.67" y1="20" x2="435.67" y2="26" stroke="#80868b" stroke-width="1"/><line x1="450.99" y1="20" x2="450.99" y2="26" stroke="#80868b" stroke-width="1"/><line x1="466.30" y1="20" x2="466.30" y2="26" stroke="#80868b" stroke-width="1"/><text x="466.30" y="18" font-size="14.67" text-anchor="middle" fill="#3c4043" font-family="Liberation Sans">1</text><line x1="481.61" y1="20" x2="481.61" y2="26" stroke="#80868b" stroke-width="1"/><line x1="496.92" y1="20" x2="496.92" y2="26" stroke="#80868b" stroke-width="1"/><line x1="512.24" y1="20" x2="512.24" y2="26" stroke="#80868b" stroke-width="1"/><line x1="527.55" y1="15" x2="527.55" y2="26" stroke="#80868b" stroke-width="1"/><line x1="542.86" y1="20" x2="542.86" y2="26" stroke="#80868b" stroke-width="1"/><line x1="558.17" y1="20" x2="558.17" y2="26" stroke="#80868b" stroke-width="1"/><line x1="573.49" y1="20" x2="573.49" y2="26" stroke="#80868b" stroke-width="1"/><line x1="588.80" y1="20" x2="588.80" y2="26" stroke="#80868b" stroke-width="1"/><text x="588.80" y="18" font-size="14.67" text-anchor="middle" fill="#3c4043" font-family="Liberation Sans">2</text><line x1="604.11" y1="20" x2="604.11" y2="26" stroke="#80868b" stroke-width="1"/><line x1="619.42" y1="20" x2="619.42" y2="26" stroke="#80868b" stroke-width="1"/><line x1="634.74" y1="20" x2="634.74" y2="26" stroke="#80868b" stroke-width="1"/><line x1="650.05" y1="15" x2="650.05" y2="26" stroke="#80868b" stroke-width="1"/><line x1="665.36" y1="20" x2="665.36" y2="26" stroke="#80868b" stroke-width="1"/><line x1="680.67" y1="20" x2="680.67" y2="26" stroke="#80868b" stroke-width="1"/><line x1="695.99" y1="20" x2="695.99" y2="26" stroke="#80868b" stroke-width="1"/><line x1="711.30" y1="20" x2="711.30" y2="26" stroke="#80868b" stroke-width="1"/><text x="711.30" y="18" font-size="14.67" text-anchor="middle" fill="#3c4043" font-family="Liberation Sans">3</text><line x1="726.61" y1="20" x2="726.61" y2="26" stroke="#80868b" stroke-width="1"/><line x1="741.92" y1="20" x2="741.92" y2="26" stroke="#80868b" stroke-width="1"/><line x1="757.24" y1="20" x2="757.24" y2="26" stroke="#80868b" stroke-width="1"/><line x1="772.55" y1="15" x2="772.55" y2="26" stroke="#80868b" stroke-width="1"/><line x1="787.86" y1="20" x2="787.86" y2="26" stroke="#80868b" stroke-width="1"/><line x1="803.17" y1="20" x2="803.17" y2="26" stroke="#80868b" stroke-width="1"/><line x1="818.49" y1="20" x2="818.49" y2="26" stroke="#80868b" stroke-width="1"/><line x1="833.80" y1="20" x2="833.80" y2="26" stroke="#80868b" stroke-width="1"/><text x="833.80" y="18" font-size="14.67" text-anchor="middle" fill="#3c4043" font-family="Liberation Sans">4</text><line x1="849.11" y1="20" x2="849.11" y2="26" stroke="#80868b" stroke-width="1"/><line x1="864.42" y1="20" x2="864.42" y2="26" stroke="#80868b" stroke-width="1"/><line x1="879.74" y1="20" x2="879.74" y2="26" stroke="#80868b" stroke-width="1"/><line x1="895.05" y1="15" x2="895.05" y2="26" stroke="#80868b" stroke-width="1"/><line x1="910.36" y1="20" x2="910.36" y2="26" stroke="#80868b" stroke-width="1"/><line x1="925.67" y1="20" x2="925.67" y2="26" stroke="#80868b" stroke-width="1"/><line x1="940.99" y1="20" x2="940.99" y2="26" stroke="#80868b" stroke-width="1"/><line x1="956.30" y1="20" x2="956.30" y2="26" stroke="#80868b" stroke-width="1"/><text x="956.30" y="18" font-size="14.67" text-anchor="middle" fill="#3c4043" font-family="Liberation Sans">5</text><line x1="971.61" y1="20" x2="971.61" y2="26" stroke="#80868b" stroke-width="1"/><line x1="986.92" y1="20" x2="986.92" y2="26" stroke="#80868b" stroke-width="1"/><line x1="1002.24" y1="20" x2="1002.24" y2="26" stroke="#80868b" stroke-width="1"/><line x1="1017.55" y1="15" x2="1017.55" y2="26" stroke="#80868b" stroke-width="1"/><line x1="1032.86" y1="20" x2="1032.86" y2="26" stroke="#80868b" stroke-width="1"/><line x1="1048.17" y1="20" x2="1048.17" y2="26" stroke="#80868b" stroke-width="1"/><line x1="1063.49" y1="20" x2="1063.49" y2="26" stroke="#80868b" stroke-width="1"/><line x1="1078.80" y1="20" x2="1078.80" y2="26" stroke="#80868b" stroke-width="1"/><text x="1078.80" y="18" font-size="14.67" text-anchor="middle" fill="#3c4043" font-family="Liberation Sans">6</text><line x1="1094.11" y1="20" x2="1094.11" y2="26" stroke="#80868b" stroke-width="1"/><line x1="1109.42" y1="20" x2="1109.42" y2="26" stroke="#80868b" stroke-width="1"/><line x1="1124.74" y1="20" x2="1124.74" y2="26" stroke="#80868b" stroke-width="1"/><line x1="1140.05" y1="15" x2="1140.05" y2="26" stroke="#80868b" stroke-width="1"/><line x1="1155.36" y1="20" x2="1155.36" y2="26" stroke="#80868b" stroke-width="1"/><line x1="1170.67" y1="20" x2="1170.67" y2="26" stroke="#80868b" stroke-width="1"/><line x1="1185.99" y1="20" x2="1185.99" y2="26" stroke="#80868b" stroke-width="1"/><line x1="1201.30" y1="20" x2="1201.30" y2="26" stroke="#80868b" stroke-width="1"/><text x="1201.30" y="18" font-size="14.67" text-anchor="middle" fill="#3c4043" font-family="Liberation Sans">7</text><line x1="1216.61" y1="20" x2="1216.61" y2="26" stroke="#80868b" stroke-width="1"/><line x1="1231.92" y1="20" x2="1231.92" y2="26" stroke="#80868b" stroke-width="1"/><line x1="1247.24" y1="20" x2="1247.24" y2="26" stroke="#80868b" stroke-width="1"/><line x1="1262.55" y1="15" x2="1262.55" y2="26" stroke="#80868b" stroke-width="1"/><line x1="1277.86" y1="20" x2="1277.86" y2="26" stroke="#80868b" stroke-width="1"/><line x1="1293.17" y1="20" x2="1293.17" y2="26" stroke="#80868b" stroke-width="1"/><line x1="1308.49" y1="20" x2="1308.49" y2="26" stroke="#80868b" stroke-width="1"/><line x1="1323.80" y1="20" x2="1323.80" y2="26" stroke="#80868b" stroke-width="1"/><text x="1323.80" y="18" font-size="14.67" text-anchor="middle" fill="#3c4043" font-family="Liberation Sans">8</text><line x1="1339.11" y1="20" x2="1339.11" y2="26" stroke="#80868b" stroke-width="1"/></svg><svg style="position:absolute;left:337px;top:251px;" width="22" height="980" viewBox="0 0 22 980" ><line x1="21.5" y1="0" x2="21.5" y2="980" stroke="#bdc1c6" stroke-width="1"/><line x1="21.5" y1="128" x2="21.5" y2="155" stroke="#5f6368" stroke-width="1"/><line x1="15.5" y1="5.22" x2="21" y2="5.22" stroke="#80868b" stroke-width="1"/><text x="0" y="0" transform="translate(12.5 5.22) rotate(-90)" font-size="14.67" text-anchor="middle" fill="#3c4043" font-family="Liberation Sans">1</text><line x1="15.5" y1="20.53" x2="21" y2="20.53" stroke="#80868b" stroke-width="1"/><line x1="15.5" y1="35.84" x2="21" y2="35.84" stroke="#80868b" stroke-width="1"/><line x1="15.5" y1="51.15" x2="21" y2="51.15" stroke="#80868b" stroke-width="1"/><line x1="9.5" y1="66.46" x2="21" y2="66.46" stroke="#80868b" stroke-width="1"/><line x1="15.5" y1="81.77" x2="21" y2="81.77" stroke="#80868b" stroke-width="1"/><line x1="15.5" y1="97.08" x2="21" y2="97.08" stroke="#80868b" stroke-width="1"/><line x1="15.5" y1="112.39" x2="21" y2="112.39" stroke="#80868b" stroke-width="1"/><line x1="15.5" y1="127.70" x2="21" y2="127.70" stroke="#80868b" stroke-width="1"/><line x1="15.5" y1="143.01" x2="21" y2="143.01" stroke="#80868b" stroke-width="1"/><line x1="15.5" y1="158.32" x2="21" y2="158.32" stroke="#80868b" stroke-width="1"/><line x1="15.5" y1="173.63" x2="21" y2="173.63" stroke="#80868b" stroke-width="1"/><line x1="9.5" y1="188.94" x2="21" y2="188.94" stroke="#80868b" stroke-width="1"/><line x1="15.5" y1="204.25" x2="21" y2="204.25" stroke="#80868b" stroke-width="1"/><line x1="15.5" y1="219.56" x2="21" y2="219.56" stroke="#80868b" stroke-width="1"/><line x1="15.5" y1="234.87" x2="21" y2="234.87" stroke="#80868b" stroke-width="1"/><line x1="15.5" y1="250.18" x2="21" y2="250.18" stroke="#80868b" stroke-width="1"/><text x="0" y="0" transform="translate(12.5 250.18) rotate(-90)" font-size="14.67" text-anchor="middle" fill="#3c4043" font-family="Liberation Sans">1</text><line x1="15.5" y1="265.49" x2="21" y2="265.49" stroke="#80868b" stroke-width="1"/><line x1="15.5" y1="280.80" x2="21" y2="280.80" stroke="#80868b" stroke-width="1"/><line x1="15.5" y1="296.11" x2="21" y2="296.11" stroke="#80868b" stroke-width="1"/><line x1="9.5" y1="311.42" x2="21" y2="311.42" stroke="#80868b" stroke-width="1"/><line x1="15.5" y1="326.73" x2="21" y2="326.73" stroke="#80868b" stroke-width="1"/><line x1="15.5" y1="342.04" x2="21" y2="342.04" stroke="#80868b" stroke-width="1"/><line x1="15.5" y1="357.35" x2="21" y2="357.35" stroke="#80868b" stroke-width="1"/><line x1="15.5" y1="372.66" x2="21" y2="372.66" stroke="#80868b" stroke-width="1"/><text x="0" y="0" transform="translate(12.5 372.66) rotate(-90)" font-size="14.67" text-anchor="middle" fill="#3c4043" font-family="Liberation Sans">2</text><line x1="15.5" y1="387.97" x2="21" y2="387.97" stroke="#80868b" stroke-width="1"/><line x1="15.5" y1="403.28" x2="21" y2="403.28" stroke="#80868b" stroke-width="1"/><line x1="15.5" y1="418.59" x2="21" y2="418.59" stroke="#80868b" stroke-width="1"/><line x1="9.5" y1="433.90" x2="21" y2="433.90" stroke="#80868b" stroke-width="1"/><line x1="15.5" y1="449.21" x2="21" y2="449.21" stroke="#80868b" stroke-width="1"/><line x1="15.5" y1="464.52" x2="21" y2="464.52" stroke="#80868b" stroke-width="1"/><line x1="15.5" y1="479.83" x2="21" y2="479.83" stroke="#80868b" stroke-width="1"/><line x1="15.5" y1="495.14" x2="21" y2="495.14" stroke="#80868b" stroke-width="1"/><text x="0" y="0" transform="translate(12.5 495.14) rotate(-90)" font-size="14.67" text-anchor="middle" fill="#3c4043" font-family="Liberation Sans">3</text><line x1="15.5" y1="510.45" x2="21" y2="510.45" stroke="#80868b" stroke-width="1"/><line x1="15.5" y1="525.76" x2="21" y2="525.76" stroke="#80868b" stroke-width="1"/><line x1="15.5" y1="541.07" x2="21" y2="541.07" stroke="#80868b" stroke-width="1"/><line x1="9.5" y1="556.38" x2="21" y2="556.38" stroke="#80868b" stroke-width="1"/><line x1="15.5" y1="571.69" x2="21" y2="571.69" stroke="#80868b" stroke-width="1"/><line x1="15.5" y1="587.00" x2="21" y2="587.00" stroke="#80868b" stroke-width="1"/><line x1="15.5" y1="602.31" x2="21" y2="602.31" stroke="#80868b" stroke-width="1"/><line x1="15.5" y1="617.62" x2="21" y2="617.62" stroke="#80868b" stroke-width="1"/><text x="0" y="0" transform="translate(12.5 617.62) rotate(-90)" font-size="14.67" text-anchor="middle" fill="#3c4043" font-family="Liberation Sans">4</text><line x1="15.5" y1="632.93" x2="21" y2="632.93" stroke="#80868b" stroke-width="1"/><line x1="15.5" y1="648.24" x2="21" y2="648.24" stroke="#80868b" stroke-width="1"/><line x1="15.5" y1="663.55" x2="21" y2="663.55" stroke="#80868b" stroke-width="1"/><line x1="9.5" y1="678.86" x2="21" y2="678.86" stroke="#80868b" stroke-width="1"/><line x1="15.5" y1="694.17" x2="21" y2="694.17" stroke="#80868b" stroke-width="1"/><line x1="15.5" y1="709.48" x2="21" y2="709.48" stroke="#80868b" stroke-width="1"/><line x1="15.5" y1="724.79" x2="21" y2="724.79" stroke="#80868b" stroke-width="1"/><line x1="15.5" y1="740.10" x2="21" y2="740.10" stroke="#80868b" stroke-width="1"/><text x="0" y="0" transform="translate(12.5 740.10) rotate(-90)" font-size="14.67" text-anchor="middle" fill="#3c4043" font-family="Liberation Sans">5</text><line x1="15.5" y1="755.41" x2="21" y2="755.41" stroke="#80868b" stroke-width="1"/><line x1="15.5" y1="770.72" x2="21" y2="770.72" stroke="#80868b" stroke-width="1"/><line x1="15.5" y1="786.03" x2="21" y2="786.03" stroke="#80868b" stroke-width="1"/><line x1="9.5" y1="801.34" x2="21" y2="801.34" stroke="#80868b" stroke-width="1"/><line x1="15.5" y1="816.65" x2="21" y2="816.65" stroke="#80868b" stroke-width="1"/><line x1="15.5" y1="831.96" x2="21" y2="831.96" stroke="#80868b" stroke-width="1"/><line x1="15.5" y1="847.27" x2="21" y2="847.27" stroke="#80868b" stroke-width="1"/><line x1="15.5" y1="862.58" x2="21" y2="862.58" stroke="#80868b" stroke-width="1"/><text x="0" y="0" transform="translate(12.5 862.58) rotate(-90)" font-size="14.67" text-anchor="middle" fill="#3c4043" font-family="Liberation Sans">6</text><line x1="15.5" y1="877.89" x2="21" y2="877.89" stroke="#80868b" stroke-width="1"/><line x1="15.5" y1="893.20" x2="21" y2="893.20" stroke="#80868b" stroke-width="1"/><line x1="15.5" y1="908.51" x2="21" y2="908.51" stroke="#80868b" stroke-width="1"/><line x1="9.5" y1="923.82" x2="21" y2="923.82" stroke="#80868b" stroke-width="1"/><line x1="15.5" y1="939.13" x2="21" y2="939.13" stroke="#80868b" stroke-width="1"/><line x1="15.5" y1="954.44" x2="21" y2="954.44" stroke="#80868b" stroke-width="1"/><line x1="15.5" y1="969.75" x2="21" y2="969.75" stroke="#80868b" stroke-width="1"/></svg><svg style="position:absolute;left:671px;top:231px;" width="18" height="16" viewBox="0 0 18 16" ><rect x="1" y="1" width="16" height="5" fill="#4285f4"/><path d="M1 8 H17 L9 15z" fill="#4285f4"/></svg><svg style="position:absolute;left:903px;top:238px;" width="18" height="9" viewBox="0 0 18 9" ><path d="M1 1 H17 L9 8.5z" fill="#4285f4"/></svg><svg style="position:absolute;left:471px;top:176px;" width="24" height="24" viewBox="0 0 24 24" ><path d="M5 9 H14 a4.6 4.6 0 0 1 0 9.2 H9" fill="none" stroke="#444746" stroke-width="2"/><path d="M9 5 L5 9 L9 13" fill="none" stroke="#444746" stroke-width="2"/></svg><svg style="position:absolute;left:514px;top:176px;" width="24" height="24" viewBox="0 0 24 24" ><path d="M19 9 H10 a4.6 4.6 0 0 0 0 9.2 H15" fill="none" stroke="#444746" stroke-width="2"/><path d="M15 5 L19 9 L15 13" fill="none" stroke="#444746" stroke-width="2"/></svg><svg style="position:absolute;left:555px;top:176px;" width="24" height="24" viewBox="0 0 24 24" ><rect x="6.5" y="2" width="15" height="6.5" rx="1.5" fill="none" stroke="#444746" stroke-width="2"/><path d="M6.5 5.2 H4 V12.5 H13.5 V15.5" fill="none" stroke="#444746" stroke-width="2"/><rect x="11.5" y="15.5" width="4" height="7" rx="1" fill="none" stroke="#444746" stroke-width="2"/></svg><svg style="position:absolute;left:596px;top:175px;" width="24" height="24" viewBox="0 0 24 24" ><circle cx="10" cy="10" r="6.8" fill="none" stroke="#444746" stroke-width="2"/><path d="M15 15 L21.5 21.5" fill="none" stroke="#444746" stroke-width="2" stroke-width="2.2"/><path d="M10 6.8 V13.2 M6.8 10 H13.2" fill="none" stroke="#444746" stroke-width="2"/></svg><svg style="position:absolute;left:626px;top:183px;" width="12" height="8" viewBox="0 0 12 8" ><path d="M0.5 0.5 H11.5 L6 6z" fill="#444746"/></svg><svg style="position:absolute;left:664px;top:175px;" width="24" height="24" viewBox="0 0 24 24" ><path d="M5.5 3.5 L17.5 11.8 L12 12.6 L15.6 19.6 L13.6 20.7 L10 13.8 L5.8 17.8z" fill="none" stroke="#041e49" stroke-width="2.1" stroke-linejoin="round"/></svg><svg style="position:absolute;left:706px;top:175px;" width="24" height="24" viewBox="0 0 24 24" ><circle cx="9" cy="8.3" r="6" fill="none" stroke="#444746" stroke-width="2"/><path d="M16.5 9.7 H22.2 V21.6 H10.3 V16.3" fill="none" stroke="#444746" stroke-width="2"/></svg><svg style="position:absolute;left:750px;top:174px;" width="24" height="24" viewBox="0 0 24 24" ><path d="M5 5 L19 19" fill="none" stroke="#444746" stroke-width="2" stroke-width="2.2"/><circle cx="5" cy="5" r="2.3" fill="#444746"/><circle cx="19" cy="19" r="2.3" fill="#444746"/></svg><svg style="position:absolute;left:785px;top:183px;" width="12" height="8" viewBox="0 0 12 8" ><path d="M0.5 0.5 H11.5 L6 6z" fill="#444746"/></svg><svg style="position:absolute;left:809px;top:174px;" width="25" height="25" viewBox="0 0 25 25" ><path d="M6 3 H19 M6 22 H19 M3 6 V19 M22 6 V19" fill="none" stroke="#444746" stroke-width="2"/><rect x="2" y="2" width="4" height="4" fill="none" stroke="#444746" stroke-width="2" stroke-width="1.8"/><rect x="19" y="2" width="4" height="4" fill="none" stroke="#444746" stroke-width="2" stroke-width="1.8"/><rect x="2" y="19" width="4" height="4" fill="none" stroke="#444746" stroke-width="2" stroke-width="1.8"/><rect x="19" y="19" width="4" height="4" fill="none" stroke="#444746" stroke-width="2" stroke-width="1.8"/><path d="M9 9 H16 M12.5 9 V16.5" fill="none" stroke="#444746" stroke-width="2" stroke-width="2.2"/></svg><svg style="position:absolute;left:852px;top:175px;" width="24" height="24" viewBox="0 0 24 24" ><rect x="4" y="4" width="17" height="17" rx="1.5" fill="none" stroke="#444746" stroke-width="2"/><path d="M7 17.5 L10.5 13 L13 15.5 L15.5 12 L18.5 17.5z" fill="#444746"/></svg><svg style="position:absolute;left:903px;top:172px;" width="24" height="22" viewBox="0 0 24 22" ><path d="M7.3 3.6 L17.3 13.3 L10.9 19.6 L4.5 13.3 L10.9 6.9" fill="none" stroke="#444746" stroke-width="2" stroke-linejoin="round"/><path d="M4.6 13.6 H17 L10.9 19.6z" fill="#444746"/><path d="M20.8 15.3 c0 0 -2.1 2.3 -2.1 3.4 a2.1 2.1 0 0 0 4.2 0 c0 -1.1 -2.1 -3.4 -2.1 -3.4z" fill="#444746"/></svg><div style="position:absolute;left:902px;top:198px;width:29px;height:4px;background:#f4bf50"></div><svg style="position:absolute;left:950px;top:174px;" width="24" height="22" viewBox="0 0 24 22" ><path d="M4.2 19.8 L3.9 16.9 L12.9 7.9 L16.1 11.1 L7.1 20.1 Z" fill="none" stroke="#444746" stroke-width="1.9" stroke-linejoin="round"/><path d="M14.9 5.9 L18.4 2.4 L21.6 5.6 L18.1 9.1z" fill="#444746"/></svg><div style="position:absolute;left:947px;top:197px;width:30px;height:5px;background:#000"></div><svg style="position:absolute;left:996px;top:177px;" width="24" height="24" viewBox="0 0 24 24" ><rect x="2" y="2" width="19" height="4" fill="#444746"/><rect x="2" y="8.5" width="19" height="2.6" fill="#444746"/><rect x="2" y="13" width="19" height="2.2" fill="#444746"/><rect x="2" y="17" width="19" height="1.7" fill="#444746"/></svg><svg style="position:absolute;left:1041px;top:177px;" width="24" height="24" viewBox="0 0 24 24" ><rect x="2" y="2" width="19" height="3.6" fill="#444746"/><path d="M2 9.5 H7 M9 9.5 H14 M16 9.5 H21" stroke="#444746" stroke-width="2.4"/><path d="M2 13.5 H5 M6.8 13.5 H9.8 M11.6 13.5 H14.6 M16.4 13.5 H19.4" stroke="#444746" stroke-width="2"/><path d="M2 17.5 H3.6 M5.4 17.5 H7 M8.8 17.5 H10.4 M12.2 17.5 H13.8 M15.6 17.5 H17.2 M19 17.5 H20.6" stroke="#444746" stroke-width="2"/></svg><div style="position:absolute;left:1102px;top:175.99px;font-size:19.5px;line-height:19.5px;font-weight:400;color:#444746;white-space:nowrap;">Arial</div><svg style="position:absolute;left:1190px;top:182px;" width="12" height="8" viewBox="0 0 12 8" ><path d="M0.5 0.5 H11.5 L6 6z" fill="#444746"/></svg><div style="position:absolute;left:1240px;top:185px;width:14px;height:2px;background:#444746"></div><div style="position:absolute;left:1265px;top:171px;width:45px;height:31px;border:1.3px solid #747775;border-radius:5px;box-sizing:border-box"></div><div style="position:absolute;left:987.5px;width:600px;text-align:center;top:177.69px;font-size:17.5px;line-height:17.5px;font-weight:400;color:#1f1f1f;white-space:nowrap;">14</div><div style="position:absolute;left:1326px;top:185.5px;width:14px;height:2px;background:#444746"></div><div style="position:absolute;left:1332px;top:179.5px;width:2px;height:14px;background:#444746"></div><div style="position:absolute;left:1077.5px;width:600px;text-align:center;top:177.92px;font-size:19px;line-height:19px;font-weight:700;color:#041e49;white-space:nowrap;">B</div><svg style="position:absolute;left:1409px;top:175px;" width="24" height="24" viewBox="0 0 24 24" ><path d="M9.5 4.5 H19 M5 19.5 H14.5 M14 4.5 L10 19.5" fill="none" stroke="#444746" stroke-width="2" stroke-width="2.4"/></svg><svg style="position:absolute;left:1451px;top:174px;" width="24" height="24" viewBox="0 0 24 24" ><path d="M7 3.5 V11.5 a5.5 5.5 0 0 0 11 0 V3.5" fill="none" stroke="#444746" stroke-width="2" stroke-width="2.2"/><path d="M5.5 21.5 H19.5" fill="none" stroke="#444746" stroke-width="2" stroke-width="1.8"/></svg><div style="position:absolute;left:1207px;width:600px;text-align:center;top:176.19px;font-size:17.5px;line-height:17.5px;font-weight:400;color:#444746;white-space:nowrap;">A</div><div style="position:absolute;left:1493px;top:195px;width:29px;height:4.5px;background:#000"></div><svg style="position:absolute;left:1540px;top:172px;" width="24" height="24" viewBox="0 0 24 24" ><path d="M3.5 19.5 L7 16.5 L9 18.5 L6.5 20.5z" fill="#444746"/><path d="M8 14 L17 5 L21 9 L12 18 L9 18 L7.5 16.5z" fill="#444746"/></svg><div style="position:absolute;left:1603.5px;top:178.5px;width:5px;height:5px;background:#444746;border-radius:50%"></div><div style="position:absolute;left:1603.5px;top:184.5px;width:5px;height:5px;background:#444746;border-radius:50%"></div><div style="position:absolute;left:1603.5px;top:190.5px;width:5px;height:5px;background:#444746;border-radius:50%"></div><div style="position:absolute;left:664px;top:349px;width:266px;height:89px;background:#f4bf50;border:1.2px solid #202020;border-radius:12px;box-sizing:border-box"></div><div style="position:absolute;left:496px;width:600px;text-align:center;top:382.99px;font-size:23.4px;line-height:23.4px;font-weight:700;color:#000;white-space:nowrap;">Click Here</div><div style="position:absolute;left:855.5px;top:379px;width:1.2px;height:28px;background:rgba(60,50,20,0.75)"></div><div style="position:absolute;left:663px;top:348px;width:268px;height:91px;border:2px solid #4285f4;box-sizing:border-box;box-shadow:0 0 0 1px rgba(66,133,244,0.25), inset 0 0 0 1px rgba(66,133,244,0.15)"></div><div style="position:absolute;left:795.8px;top:324px;width:1.2px;height:20px;background:#4285f4"></div><div style="position:absolute;left:791.5px;top:312.5px;width:9.5px;height:9.5px;background:#4285f4;border-radius:50%"></div><div style="position:absolute;left:659.7px;top:344.7px;width:10.6px;height:10.6px;background:#4285f4;border:0.8px solid #fff;box-sizing:border-box"></div><div style="position:absolute;left:791.7px;top:344.7px;width:10.6px;height:10.6px;background:#4285f4;border:0.8px solid #fff;box-sizing:border-box"></div><div style="position:absolute;left:923.7px;top:344.7px;width:10.6px;height:10.6px;background:#4285f4;border:0.8px solid #fff;box-sizing:border-box"></div><div style="position:absolute;left:659.7px;top:388.2px;width:10.6px;height:10.6px;background:#4285f4;border:0.8px solid #fff;box-sizing:border-box"></div><div style="position:absolute;left:923.7px;top:388.2px;width:10.6px;height:10.6px;background:#4285f4;border:0.8px solid #fff;box-sizing:border-box"></div><div style="position:absolute;left:659.7px;top:431.7px;width:10.6px;height:10.6px;background:#4285f4;border:0.8px solid #fff;box-sizing:border-box"></div><div style="position:absolute;left:791.7px;top:431.7px;width:10.6px;height:10.6px;background:#4285f4;border:0.8px solid #fff;box-sizing:border-box"></div><div style="position:absolute;left:923.7px;top:431.7px;width:10.6px;height:10.6px;background:#4285f4;border:0.8px solid #fff;box-sizing:border-box"></div><svg style="position:absolute;left:672px;top:342px;" width="14" height="14" viewBox="0 0 14 14" ><path d="M7 1.2 L12.8 7 L7 12.8 L1.2 7z" fill="#f4bf50" stroke="#a8741a" stroke-width="1.2"/></svg>
</body></html>
